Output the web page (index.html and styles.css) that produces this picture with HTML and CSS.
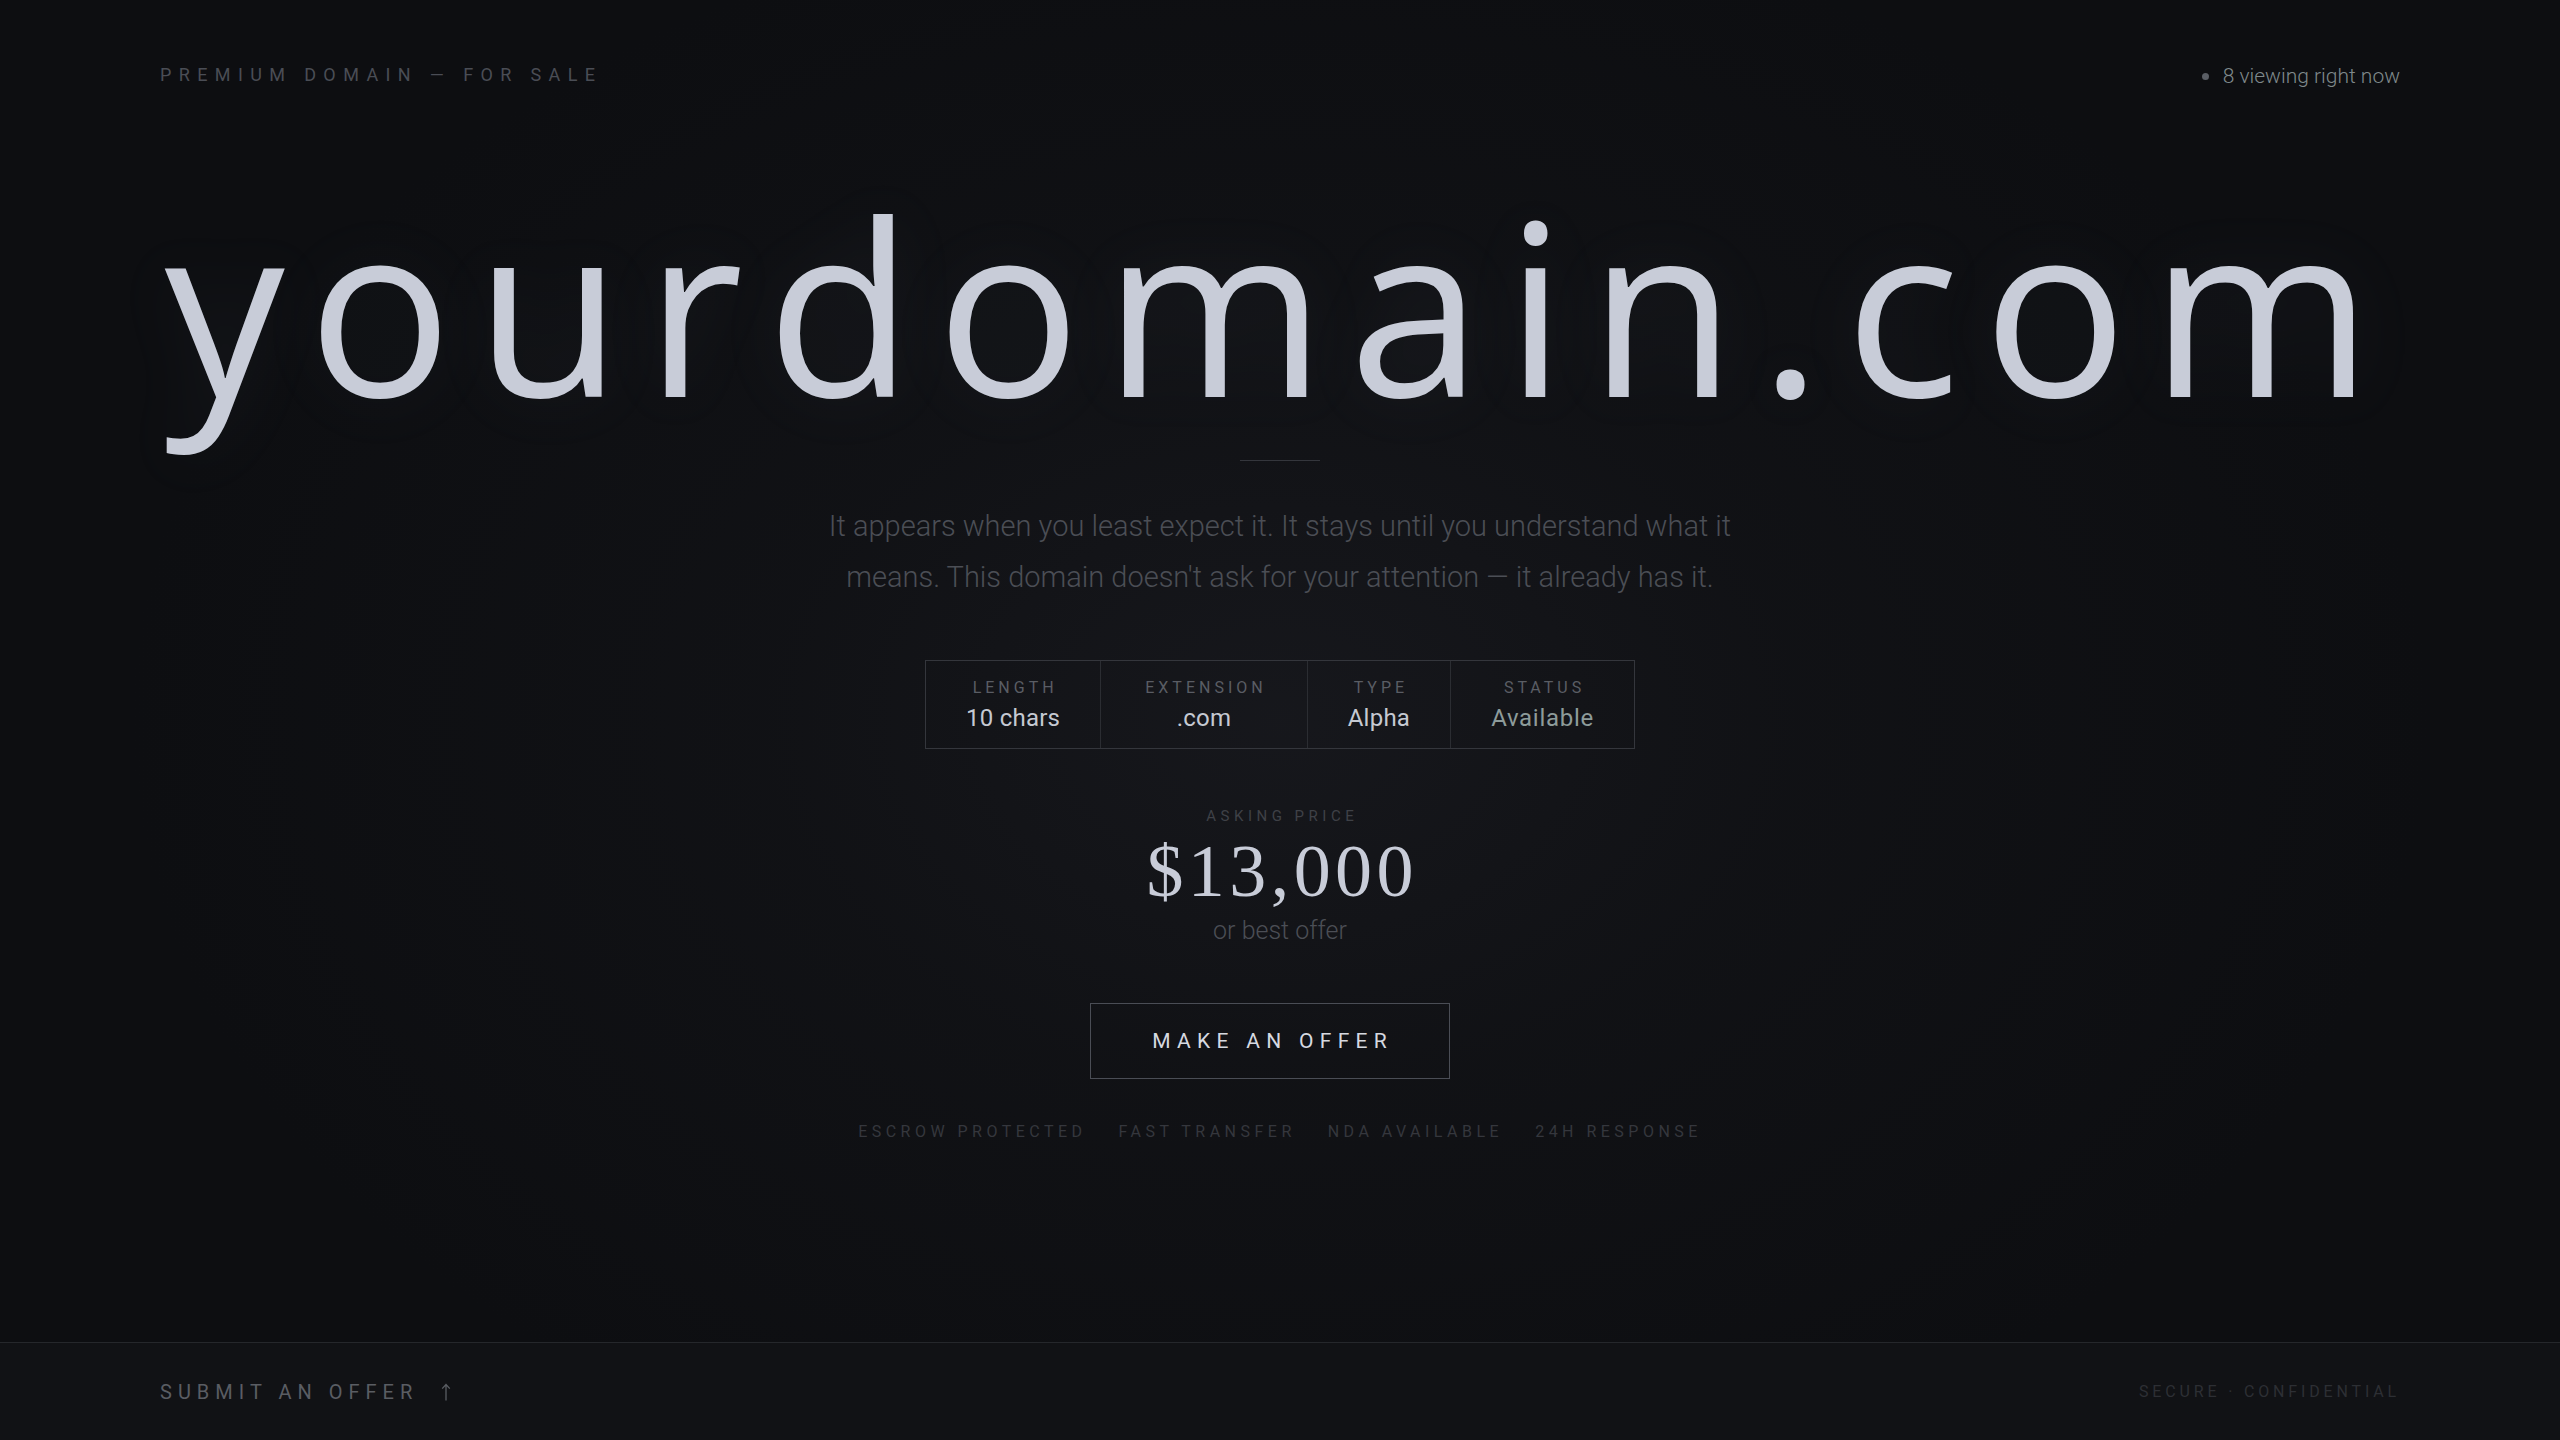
FILE: index.html
```html
<!DOCTYPE html>
<html lang="en">
<head>
<meta charset="utf-8">
<title>yourdomain.com — Premium Domain For Sale</title>
<link rel="stylesheet" href="styles.css">
</head>
<body>
<div class="page">
  <header class="topbar">
    <div class="eyebrow">PREMIUM DOMAIN — FOR SALE</div>
    <div class="live"><span class="live-dot"></span><span>8 viewing right now</span></div>
  </header>

  <main class="hero">
    <h1 class="domain">yourdomain.com</h1>
    <div class="divider"></div>
    <p class="lede">It appears when you least expect it. It stays until you understand what it means. This domain doesn't ask for your attention — it already has it.</p>

    <div class="stats">
      <div class="stat">
        <div class="stat-label">LENGTH</div>
        <div class="stat-value">10 chars</div>
      </div>
      <div class="stat">
        <div class="stat-label">EXTENSION</div>
        <div class="stat-value">.com</div>
      </div>
      <div class="stat">
        <div class="stat-label">TYPE</div>
        <div class="stat-value">Alpha</div>
      </div>
      <div class="stat">
        <div class="stat-label">STATUS</div>
        <div class="stat-value stat-available">Available</div>
      </div>
    </div>

    <div class="price-label">ASKING PRICE</div>
    <div class="price">$13,000</div>
    <div class="price-note">or best offer</div>

    <button class="offer-btn" type="button">MAKE AN OFFER</button>

    <ul class="trust">
      <li>ESCROW PROTECTED</li>
      <li>FAST TRANSFER</li>
      <li>NDA AVAILABLE</li>
      <li>24H RESPONSE</li>
    </ul>
  </main>

  <footer class="footer">
    <div class="footer-cta">SUBMIT AN OFFER
      <svg class="arrow" width="10" height="18" viewBox="0 0 10 18" aria-hidden="true">
        <path d="M5 17.5V1.5M1.2 5.6L5 1.5l3.8 4.1" fill="none" stroke="currentColor" stroke-width="1.3"/>
      </svg>
    </div>
    <div class="footer-note">SECURE · CONFIDENTIAL</div>
  </footer>
</div>
</body>
</html>
```

FILE: styles.css
```css
* { box-sizing: border-box; }

html, body {
  margin: 0;
  padding: 0;
  height: 100%;
}

body {
  background: #0e0f12;
  color: #c8ccd8;
  font-family: Roboto, "Liberation Sans", Arial, sans-serif;
}

.page {
  min-height: 100vh;
  display: flex;
  flex-direction: column;
  background:
    radial-gradient(ellipse 1150px 820px at 50% 50%, rgba(24, 25, 30, 0.85) 0%, rgba(20, 21, 25, 0.5) 45%, rgba(14, 15, 18, 0) 100%),
    #0d0e11;
}

.topbar {
  display: flex;
  justify-content: space-between;
  align-items: center;
  padding: 63px 160px 0;
  height: 87px;
}

.eyebrow {
  font-family: Roboto, "Liberation Sans", sans-serif;
  font-size: 18px;
  line-height: 24px;
  letter-spacing: 0.41em;
  color: #4a4d55;
}

.live {
  display: flex;
  align-items: center;
  gap: 14px;
  font-size: 21px;
  line-height: 26px;
  font-weight: 300;
  color: #7f898b;
  padding-top: 2px;
}

.live-dot {
  width: 7px;
  height: 7px;
  border-radius: 50%;
  background: #5a5e65;
}

.hero {
  flex: 1;
  display: flex;
  flex-direction: column;
  align-items: center;
}

.domain {
  margin: 97px 0 0;
  font-family: "Open Sans", "Noto Sans", sans-serif;
  font-weight: 400;
  font-size: 240px;
  line-height: 240px;
  letter-spacing: 23px;
  color: #c8ccd8;
  text-shadow: 0 0 70px rgba(190, 200, 225, 0.08);
  white-space: nowrap;
}

.divider {
  margin-top: 36px;
  width: 80px;
  height: 1px;
  background: #34363c;
}

.lede {
  margin: 40px 0 0;
  max-width: 960px;
  text-align: center;
  font-size: 29px;
  line-height: 51px;
  font-weight: 300;
  color: #4b4e55;
}

.stats {
  margin-top: 57px;
  display: flex;
  border: 1px solid #34363c;
}

.stat {
  padding: 17px 40px 15px;
  display: flex;
  flex-direction: column;
  align-items: center;
  gap: 6px;
}

.stat + .stat {
  border-left: 1px solid #2b2d32;
}

.stat-label {
  font-size: 16px;
  line-height: 20px;
  letter-spacing: 0.25em;
  padding-left: 0.25em;
  color: #5a5d64;
}

.stat-value {
  font-size: 24px;
  line-height: 29px;
  letter-spacing: 0.01em;
  color: #c5c9d2;
}

.stat-available {
  color: #8d9b9a;
  letter-spacing: 0.03em;
}

.price-label {
  margin-top: 57px;
  font-size: 15px;
  line-height: 20px;
  letter-spacing: 0.3em;
  padding-left: 0.3em;
  color: #3f4147;
}

.price {
  margin-top: 8px;
  font-family: "Liberation Serif", "Times New Roman", serif;
  font-size: 74px;
  line-height: 74px;
  letter-spacing: 0.06em;
  padding-left: 0.06em;
  color: #c8ccd8;
}

.price-note {
  margin-top: 8px;
  font-size: 25px;
  line-height: 30px;
  font-weight: 300;
  color: #4b4e55;
}

.offer-btn {
  margin: 57px 21px 0 0;
  width: 360px;
  height: 76px;
  background: transparent;
  border: 1px solid #4a4d55;
  color: #d6d9e0;
  font-family: Roboto, "Liberation Sans", sans-serif;
  font-size: 21px;
  letter-spacing: 0.3em;
  padding: 0 0 0 0.3em;
  cursor: pointer;
}

.trust {
  margin: 43px 0 0;
  padding: 0;
  list-style: none;
  display: flex;
  gap: 32px;
  font-size: 16px;
  line-height: 20px;
  letter-spacing: 0.28em;
  color: #35373d;
}

.footer {
  height: 98px;
  border-top: 1px solid #25272b;
  background: #111215;
  display: flex;
  justify-content: space-between;
  align-items: center;
  padding: 0 160px;
}

.footer-cta {
  display: flex;
  align-items: center;
  font-size: 20px;
  line-height: 24px;
  letter-spacing: 0.3em;
  color: #5a5d63;
}

.arrow {
  margin-left: 23px;
  color: #5a5d63;
}

.footer-note {
  font-size: 16px;
  line-height: 20px;
  letter-spacing: 0.24em;
  color: #2d2f34;
}
```
